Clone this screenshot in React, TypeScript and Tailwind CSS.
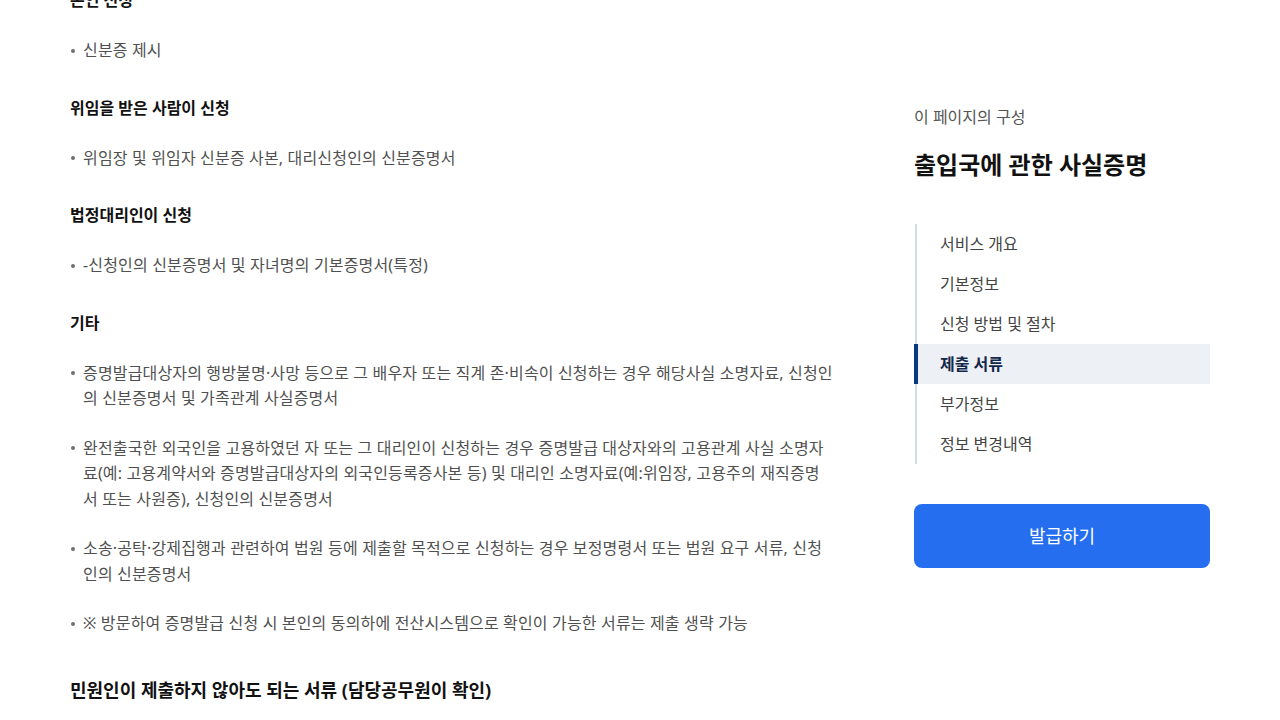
import React from 'react';

type Section = {
  title: string;
  items: string[];
};

const sections: Section[] = [
  { title: '본인 신청', items: ['신분증 제시'] },
  { title: '위임을 받은 사람이 신청', items: ['위임장 및 위임자 신분증 사본, 대리신청인의 신분증명서'] },
  { title: '법정대리인이 신청', items: ['-신청인의 신분증명서 및 자녀명의 기본증명서(특정)'] },
  {
    title: '기타',
    items: [
      '증명발급대상자의 행방불명·사망 등으로 그 배우자 또는 직계 존·비속이 신청하는 경우 해당사실 소명자료, 신청인의 신분증명서 및 가족관계 사실증명서',
      '완전출국한 외국인을 고용하였던 자 또는 그 대리인이 신청하는 경우 증명발급 대상자와의 고용관계 사실 소명자료(예: 고용계약서와 증명발급대상자의 외국인등록증사본 등) 및 대리인 소명자료(예:위임장, 고용주의 재직증명서 또는 사원증), 신청인의 신분증명서',
      '소송·공탁·강제집행과 관련하여 법원 등에 제출할 목적으로 신청하는 경우 보정명령서 또는 법원 요구 서류, 신청인의 신분증명서',
      '※ 방문하여 증명발급 신청 시 본인의 동의하에 전산시스템으로 확인이 가능한 서류는 제출 생략 가능',
    ],
  },
];

const navItems = ['서비스 개요', '기본정보', '신청 방법 및 절차', '제출 서류', '부가정보', '정보 변경내역'];

const BulletList = ({ items }: { items: string[] }) => (
  <ul className="mt-[26px] flex flex-col gap-[24px]">
    {items.map(item => (
      <li key={item} className="flex text-[16px] leading-[25.5px] tracking-[0.16px] text-[#505050]">
        <span className="flex h-[25.5px] w-[13px] shrink-0 items-center">
          <span className="ml-[1px] h-[4px] w-[4px] rounded-full bg-[#707070]" />
        </span>
        <span>{item}</span>
      </li>
    ))}
  </ul>
);

export default function App() {
  return (
    <div
      className="h-[720px] overflow-hidden bg-white"
      style={{ fontFamily: '"Noto Sans", "Noto Sans CJK KR", sans-serif' }}
    >
      <div className="flex items-start">
        <main className="-mt-[12px] ml-[70px] w-[764px]">
          {sections.map((section, i) => (
            <section key={section.title} className={i === 0 ? '' : 'mt-[32px]'}>
              <h4 className="text-[16px] font-bold leading-[24px] text-[#111]">{section.title}</h4>
              <BulletList items={section.items} />
            </section>
          ))}
          <h3 className="mt-[40px] text-[18px] font-bold leading-[27px] text-[#111]">
            민원인이 제출하지 않아도 되는 서류 (담당공무원이 확인)
          </h3>
        </main>

        <aside className="ml-[80px] mt-[106px] w-[296px]">
          <p className="text-[16px] leading-[22px] text-[#555]">이 페이지의 구성</p>
          <h2 className="mt-[21px] text-[24px] font-bold leading-[32px] text-[#111]">
            출입국에 관한 사실증명
          </h2>
          <ul className="mt-[43px] ml-[1px] border-l-2 border-[#d3dbe7]">
            {navItems.map(item => {
              const active = item === '제출 서류';
              return (
                <li
                  key={item}
                  className={
                    active
                      ? '-ml-[3px] flex h-[40px] items-center bg-[#edf0f5] pl-[26px] text-[16px] font-bold text-[#14284b] shadow-[inset_4px_0_0_#063a80]'
                      : 'flex h-[40px] items-center pl-[23px] text-[16px] text-[#444]'
                  }
                >
                  {item}
                </li>
              );
            })}
          </ul>
          <button className="mt-[40px] flex h-[64px] w-full items-center justify-center rounded-[8px] bg-[#256ef0] text-[18px] text-white">
            발급하기
          </button>
        </aside>
      </div>
    </div>
  );
}
